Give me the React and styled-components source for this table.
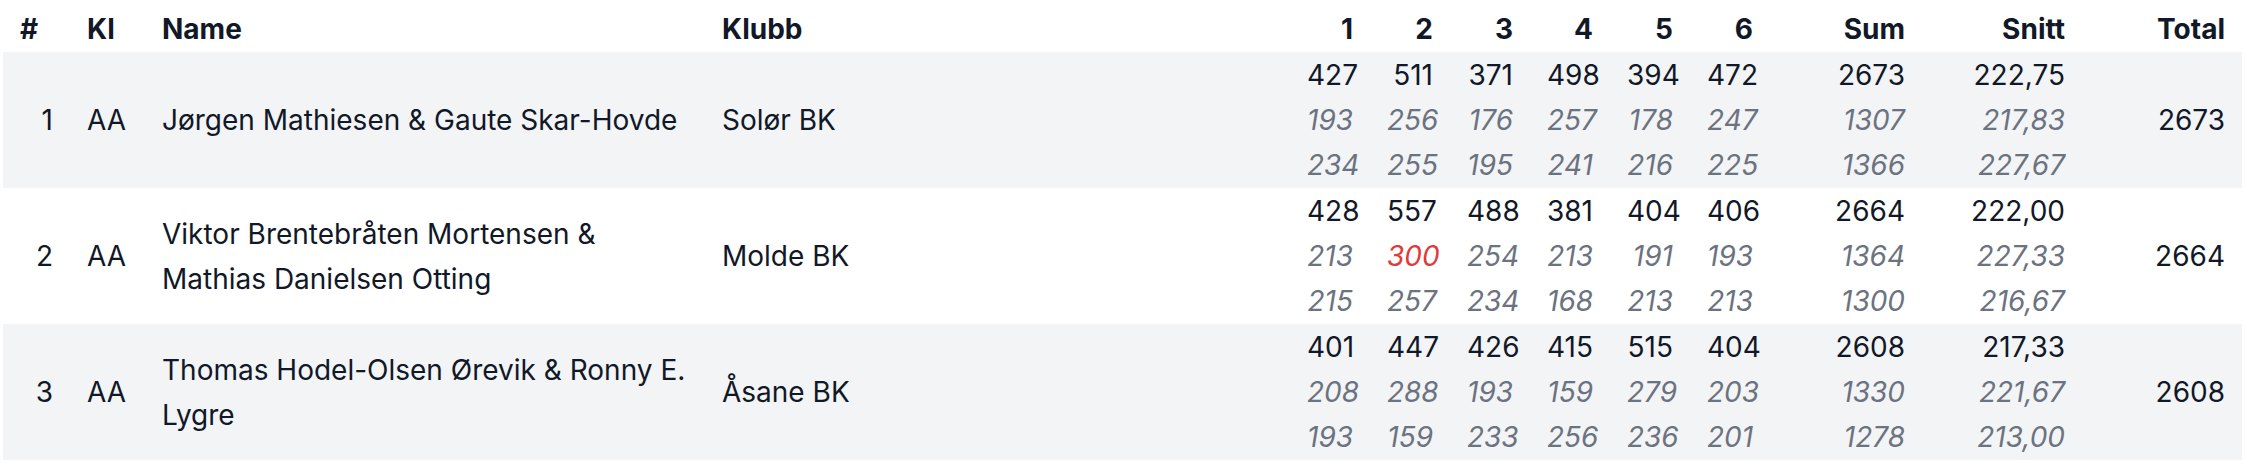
import React from "react";
import styled, { createGlobalStyle } from "styled-components";

const rows = [
  {
    rank: 1,
    klasse: "AA",
    name: "Jørgen Mathiesen & Gaute Skar-Hovde",
    club: "Solør BK",
    total: 2673,
    lines: [
      [427, 511, 371, 498, 394, 472, 2673, "222,75"],
      [193, 256, 176, 257, 178, 247, 1307, "217,83"],
      [234, 255, 195, 241, 216, 225, 1366, "227,67"],
    ],
  },
  {
    rank: 2,
    klasse: "AA",
    name: "Viktor Brentebråten Mortensen & Mathias Danielsen Otting",
    club: "Molde BK",
    total: 2664,
    lines: [
      [428, 557, 488, 381, 404, 406, 2664, "222,00"],
      [213, 300, 254, 213, 191, 193, 1364, "227,33"],
      [215, 257, 234, 168, 213, 213, 1300, "216,67"],
    ],
  },
  {
    rank: 3,
    klasse: "AA",
    name: "Thomas Hodel-Olsen Ørevik & Ronny E. Lygre",
    club: "Åsane BK",
    total: 2608,
    lines: [
      [401, 447, 426, 415, 515, 404, 2608, "217,33"],
      [208, 288, 193, 159, 279, 203, 1330, "221,67"],
      [193, 159, 233, 256, 236, 201, 1278, "213,00"],
    ],
  },
];

const App = () => {
  return (
    <>
      <GlobalStyle />
      <Table>
        <HeaderRow>
          <HeadCell>#</HeadCell>
          <HeadCell>Kl</HeadCell>
          <HeadCell>Name</HeadCell>
          <HeadCell>Klubb</HeadCell>
          {[1, 2, 3, 4, 5, 6].map((n) => (
            <HeadCell key={n} $right>{n}</HeadCell>
          ))}
          <HeadCell $right>Sum</HeadCell>
          <HeadCell $right>Snitt</HeadCell>
          <HeadCell $right>Total</HeadCell>
        </HeaderRow>
        {rows.map((row, i) => (
          <Row key={row.rank} $shaded={i % 2 === 0}>
            <Cell $right>{row.rank}</Cell>
            <Cell>{row.klasse}</Cell>
            <Cell>{row.name}</Cell>
            <Cell>{row.club}</Cell>
            {row.lines[0].map((_, col) => (
              <ScoreCell key={col}>
                {row.lines.map((line, li) => (
                  <ScoreLine
                    key={li}
                    $sub={li > 0}
                    $highlight={li > 0 && col < 6 && line[col] >= 300}
                  >
                    {line[col]}
                  </ScoreLine>
                ))}
              </ScoreCell>
            ))}
            <Cell $right>{row.total}</Cell>
          </Row>
        ))}
      </Table>
    </>
  );
};

export default App;

const GlobalStyle = createGlobalStyle`
  body {
    margin: 0;
    background: #ffffff;
    font-family: Inter, "Noto Sans", "Liberation Sans", sans-serif;
    color: #111827;
  }
`;

const Table = styled.div`
  margin-left: 3px;
  width: 2239px;
  font-size: 28px;
  line-height: 45px;
`;

const columns = `67px 75px 560px 585px repeat(6, 80px) 152px 160px 160px`;

const HeaderRow = styled.div`
  display: grid;
  grid-template-columns: ${columns};
  padding-top: 7px;
  height: 52px;
  box-sizing: border-box;
`;

const HeadCell = styled.div`
  padding: 0 17px;
  font-weight: 700;
  text-align: ${(p) => (p.$right ? "right" : "left")};
  white-space: nowrap;
`;

const Row = styled.div`
  display: grid;
  grid-template-columns: ${columns};
  align-items: center;
  padding: 1px 0 0;
  min-height: 136px;
  box-sizing: border-box;
  background: ${(p) => (p.$shaded ? "#f3f4f6" : "#ffffff")};
`;

const Cell = styled.div`
  padding: 0 17px;
  text-align: ${(p) => (p.$right ? "right" : "left")};
`;

const ScoreCell = styled.div`
  display: flex;
  flex-direction: column;
  padding: 0 17px;
  text-align: right;
`;

const ScoreLine = styled.div`
  height: 45px;
  font-style: ${(p) => (p.$sub ? "italic" : "normal")};
  color: ${(p) => (p.$highlight ? "#e03a3a" : p.$sub ? "#6b7280" : "#111827")};
`;
